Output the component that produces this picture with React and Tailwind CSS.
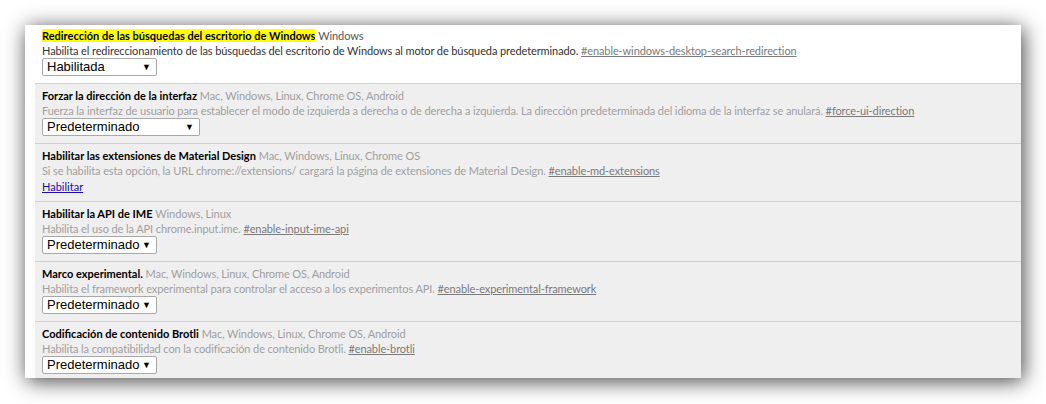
import { useState } from "react";

const rows = [
  {
    title: "Redirección de las búsquedas del escritorio de Windows",
    platforms: "Windows",
    desc: "Habilita el redireccionamiento de las búsquedas del escritorio de Windows al motor de búsqueda predeterminado.",
    hash: "#enable-windows-desktop-search-redirection",
    control: { type: "select", value: "Habilitada", width: "w-[115px]" },
    active: true,
  },
  {
    title: "Forzar la dirección de la interfaz",
    platforms: "Mac, Windows, Linux, Chrome OS, Android",
    desc: "Fuerza la interfaz de usuario para establecer el modo de izquierda a derecha o de derecha a izquierda. La dirección predeterminada del idioma de la interfaz se anulará.",
    hash: "#force-ui-direction",
    control: { type: "select", value: "Predeterminado", width: "w-[158px]" },
  },
  {
    title: "Habilitar las extensiones de Material Design",
    platforms: "Mac, Windows, Linux, Chrome OS",
    desc: "Si se habilita esta opción, la URL chrome://extensions/ cargará la página de extensiones de Material Design.",
    hash: "#enable-md-extensions",
    control: { type: "link", value: "Habilitar" },
  },
  {
    title: "Habilitar la API de IME",
    platforms: "Windows, Linux",
    desc: "Habilita el uso de la API chrome.input.ime.",
    hash: "#enable-input-ime-api",
    control: { type: "select", value: "Predeterminado", width: "w-[115px]" },
  },
  {
    title: "Marco experimental.",
    platforms: "Mac, Windows, Linux, Chrome OS, Android",
    desc: "Habilita el framework experimental para controlar el acceso a los experimentos API.",
    hash: "#enable-experimental-framework",
    control: { type: "select", value: "Predeterminado", width: "w-[115px]" },
  },
  {
    title: "Codificación de contenido Brotli",
    platforms: "Mac, Windows, Linux, Chrome OS, Android",
    desc: "Habilita la compatibilidad con la codificación de contenido Brotli.",
    hash: "#enable-brotli",
    control: { type: "select", value: "Predeterminado", width: "w-[115px]" },
    last: true,
  },
];

function FakeSelect({ value, width }) {
  return (
    <div
      className={`${width} h-[18px] flex items-center justify-between bg-white border border-[#a9a9a9] rounded-[2px] pl-[4px] pr-[5px] text-[13px] leading-[16px] text-black tracking-normal`}
      style={{ fontFamily: '"Liberation Sans", Arial, sans-serif' }}
    >
      <span>{value}</span>
      <span className="text-[9px] leading-none">▼</span>
    </div>
  );
}

function FlagRow({ row, first }) {
  return (
    <div
      className={`ml-[10px] pl-[7px] ${first ? "bg-white pt-[3px]" : "bg-[#efefef] border-t border-[#d0d0d0] pt-[4px]"} ${row.last ? "pb-[4px]" : "pb-[7px]"}`}
    >
      <div className="leading-[15px] whitespace-nowrap">
        <span className={`font-bold text-black ${row.active ? "bg-[#ffff00]" : ""}`}>{row.title}</span>{" "}
        <span className={`tracking-[-0.1px] ${row.active ? "text-[#555]" : "text-[#a0a0a0]"}`}>{row.platforms}</span>
      </div>
      <div className="leading-[15px] whitespace-nowrap tracking-[-0.1px]">
        <span className={row.active ? "text-[#333]" : "text-[#a0a0a0]"}>{row.desc}</span>{" "}
        <a className="text-[#7a7a7a] underline">{row.hash}</a>
      </div>
      {row.control.type === "select" ? (
        <FakeSelect value={row.control.value} width={row.control.width} />
      ) : (
        <div className="h-[16px] leading-[18px]">
          <a className="text-[#1a0dab] underline">{row.control.value}</a>
        </div>
      )}
    </div>
  );
}

export default function App() {
  const [items] = useState(rows);
  return (
    <div className="w-[1046px] h-[404px] bg-white pt-[25px] pl-[25px] overflow-hidden">
      <div
        className="w-[996px] h-[353px] bg-white overflow-hidden shadow-[2px_3px_20px_rgba(0,0,0,0.75)] text-[11px]"
        style={{ fontFamily: 'Lato, "Liberation Sans", sans-serif' }}
      >
        {items.map((row, i) => (
          <FlagRow key={i} row={row} first={i === 0} />
        ))}
      </div>
    </div>
  );
}
